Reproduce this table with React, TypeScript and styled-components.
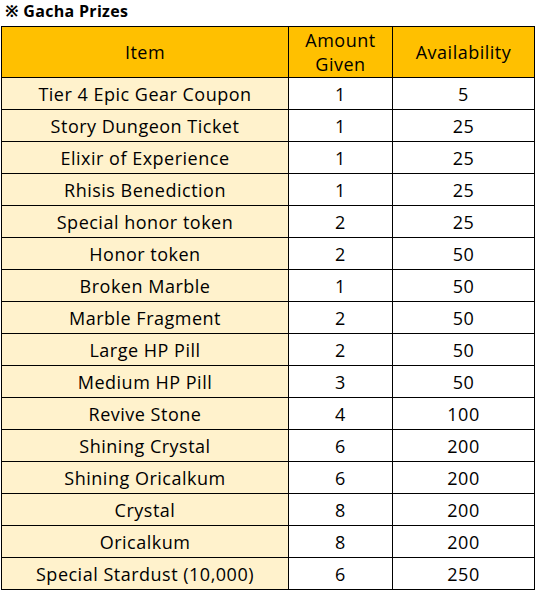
import React from "react";
import styled, { createGlobalStyle } from "styled-components";

const Global = createGlobalStyle`
  html, body { margin: 0; padding: 0; background: #ffffff; }
  body { font-family: "Open Sans", "Noto Sans", sans-serif; color: #000; }
`;

const Page = styled.div`
  padding: 0 0 0 1px;
  width: 537px;
  box-sizing: border-box;
`;

const Title = styled.div`
  height: 26px;
  box-sizing: border-box;
  padding: 0 0 0 4px;
  font-size: 16px;
  font-weight: 700;
  line-height: 22px;
  letter-spacing: 0.3px;
`;

const Grid = styled.div`
  display: grid;
  grid-template-columns: 286px 103px 141px;
  grid-template-rows: 50px repeat(16, 31px);
  gap: 1px;
  background: #000;
  border: 1px solid #000;
  width: 534px;
  box-sizing: border-box;
`;

const Cell = styled.div<{ $head?: boolean; $item?: boolean }>`
  display: flex;
  align-items: center;
  justify-content: center;
  text-align: center;
  font-size: 18px;
  line-height: 24px;
  letter-spacing: 0.5px;
  background: ${(p) => (p.$head ? "#ffc000" : p.$item ? "#fff2cc" : "#ffffff")};
`;

const rows: [string, number, number][] = [
  ["Tier 4 Epic Gear Coupon", 1, 5],
  ["Story Dungeon Ticket", 1, 25],
  ["Elixir of Experience", 1, 25],
  ["Rhisis Benediction", 1, 25],
  ["Special honor token", 2, 25],
  ["Honor token", 2, 50],
  ["Broken Marble", 1, 50],
  ["Marble Fragment", 2, 50],
  ["Large HP Pill", 2, 50],
  ["Medium HP Pill", 3, 50],
  ["Revive Stone", 4, 100],
  ["Shining Crystal", 6, 200],
  ["Shining Oricalkum", 6, 200],
  ["Crystal", 8, 200],
  ["Oricalkum", 8, 200],
  ["Special Stardust (10,000)", 6, 250],
];

export default function App() {
  return (
    <Page>
      <Global />
      <Title>※ Gacha Prizes</Title>
      <Grid>
        <Cell $head>Item</Cell>
        <Cell $head>
          Amount
          <br />
          Given
        </Cell>
        <Cell $head>Availability</Cell>
        {rows.map(([name, amt, avail]) => (
          <React.Fragment key={name}>
            <Cell $item>{name}</Cell>
            <Cell>{amt}</Cell>
            <Cell>{avail}</Cell>
          </React.Fragment>
        ))}
      </Grid>
    </Page>
  );
}
